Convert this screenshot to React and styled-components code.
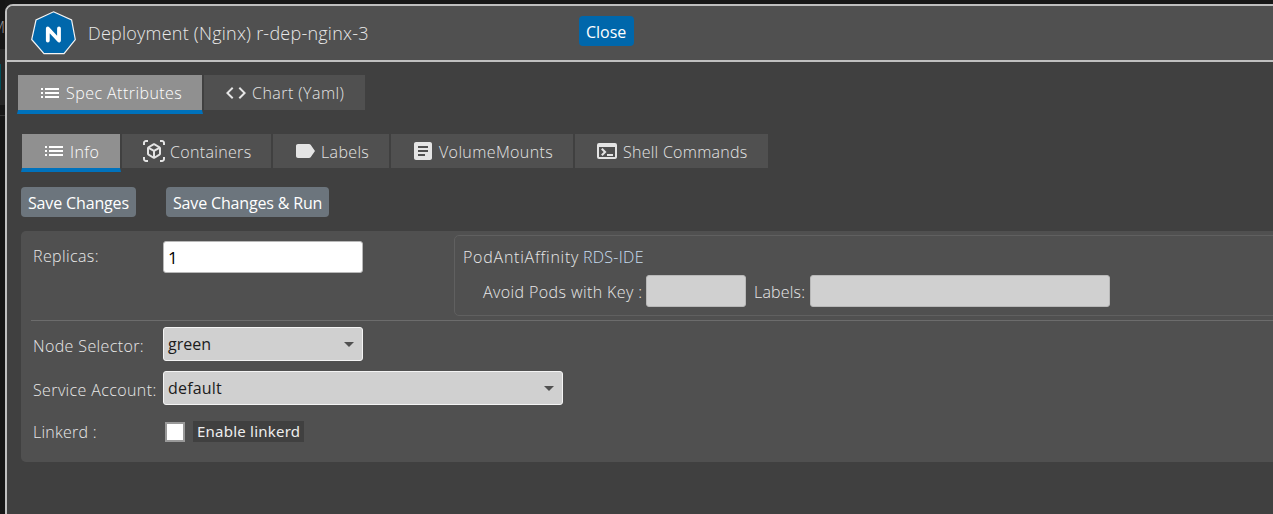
import React from "react";
import styled, { createGlobalStyle } from "styled-components";
import { MdList, MdCode, MdOutlineViewInAr, MdLabel, MdArticle, MdTerminal } from "react-icons/md";

const GlobalStyle = createGlobalStyle`
  * { box-sizing: border-box; }
  body {
    margin: 0;
    overflow: hidden;
    background: #181818;
    color: #e8e8e8;
    font: 300 16px/24px "Open Sans", "Noto Sans", sans-serif;
  }
`;

const Screen = styled.div`
  display: flex;
  width: 100vw;
  height: 100vh;
  overflow: hidden;
`;

const Backdrop = styled.aside`
  flex: 0 0 5px;
  display: flex;
  flex-direction: column;
  overflow: hidden;
  background: #161616;
`;

const BackdropTitle = styled.div`
  height: 49px;
  padding-top: 15px;
  display: flex;
  justify-content: flex-end;
  color: #9a9a9a;
`;

const BackdropItem = styled.div`
  height: 56px;
  padding-top: 15px;
  background: #272727;
`;

const BackdropMark = styled.div`
  width: 1px;
  height: 26px;
  background: #00505c;
`;

const BackdropRule = styled.div`
  height: 11px;
  border-bottom: 1px solid #333;
`;

const Window = styled.main`
  flex: 0 0 1290px;
  height: 540px;
  margin-top: 4px;
  border: 2px solid #c0c0c0;
  border-radius: 8px;
  background: #404040;
  overflow: hidden;
`;

const Header = styled.header`
  display: flex;
  height: 56px;
  padding-left: 23px;
  border-bottom: 2px solid #c0c0c0;
  background: #505050;
`;

const Logo = styled.svg`
  flex: none;
  width: 48px;
  height: 48px;
  margin-top: 3px;
`;

const Text = styled.span`
  display: block;
  flex: none;
  white-space: nowrap;
  width: ${(p) => (p.$w ? `${p.$w}px` : "auto")};
  letter-spacing: ${(p) => p.$ls || 0}px;
`;

const Title = styled(Text)`
  margin: 15px 0 0 10px;
  font-size: 18px;
`;

const Button = styled.button`
  flex: none;
  width: ${(p) => p.$w}px;
  height: 30px;
  padding: 1px 0 0 7px;
  border: 0;
  border-radius: 4px;
  background: ${(p) => (p.$primary ? "#0067ab" : "#6c757d")};
  color: #fff;
  font: 400 16px/24px "Open Sans", "Noto Sans", sans-serif;
  text-align: left;
`;

const CloseButton = styled(Button)`
  margin: 10px 0 0 211px;
`;

const TabBar = styled.nav`
  display: flex;
  align-items: flex-start;
  padding-left: ${(p) => p.$left}px;
  margin-top: ${(p) => p.$top}px;
  height: ${(p) => p.$h + 4}px;
`;

const Tab = styled.div`
  display: flex;
  align-items: center;
  width: ${(p) => p.$w}px;
  height: ${(p) => p.$h + (p.$active ? 4 : 0)}px;
  padding-left: 20px;
  border: 1px solid #404040;
  border-width: 0 1px ${(p) => (p.$active ? "4px" : "0")};
  border-bottom-color: #0072bc;
  background: ${(p) => (p.$active ? "#909090" : "#505050")};
  color: ${(p) => (p.$active ? "#fff" : "#e4e4e4")};
  svg {
    flex: none;
    width: 24px;
    height: 24px;
    margin-right: 4px;
  }
`;

const SubTabText = styled(Text)`
  padding-top: 2px;
`;

const Actions = styled.div`
  display: flex;
  gap: 30px;
  padding: 15px 0 14px 14px;
`;

const Panel = styled.section`
  width: 1290px;
  height: 231px;
  margin-left: 14px;
  padding-left: 10px;
  border-radius: 5px;
  background: #505050;
`;

const TopRow = styled.div`
  display: flex;
  height: 90px;
  padding: 4px 0 0 2px;
  border-bottom: 1px solid #6c6c6c;
`;

const Label = styled(Text)`
  width: 130px;
`;

const ReplicaLabel = styled(Label)`
  margin-top: 9px;
`;

const Input = styled.input`
  flex: none;
  width: ${(p) => p.$w}px;
  height: 32px;
  padding: 0 4px;
  border: 1px solid #b8b8b8;
  border-radius: 3px;
  background: ${(p) => (p.$off ? "#d0d0d0" : "#fff")};
  color: #000;
  font: 400 17px/24px "Open Sans", "Noto Sans", sans-serif;
`;

const ReplicaInput = styled(Input)`
  margin-top: 6px;
`;

const Affinity = styled.div`
  width: 1000px;
  height: 81px;
  margin-left: 91px;
  padding: 9px 0 0 8px;
  border: 1px solid #606060;
  border-radius: 5px;
`;

const AffinityTitle = styled.div`
  display: flex;
  height: 30px;
`;

const Link = styled(Text)`
  color: #c8def0;
`;

const AffinityFields = styled.div`
  display: flex;
  align-items: center;
  padding-left: 20px;
`;

const FieldLabel = styled(Text)`
  padding: 2px 0 0 ${(p) => p.$pad || 0}px;
`;

const Row = styled.div`
  display: flex;
  align-items: center;
  padding-left: 2px;
  height: ${(p) => p.$h}px;
  margin-top: ${(p) => p.$top}px;
`;

const RowLabel = styled(Label)`
  padding-top: ${(p) => p.$pad}px;
`;

const Select = styled.div`
  display: flex;
  align-items: center;
  justify-content: space-between;
  width: ${(p) => p.$w}px;
  height: 34px;
  padding: 0 8px 0 4px;
  border: 1px solid #f4f4f4;
  border-radius: 3px;
  background: #d0d0d0;
  color: #1c1c1c;
  font-weight: 400;
`;

const Caret = styled.i`
  border: 5px solid transparent;
  border-top-color: #505050;
  border-bottom: 0;
`;

const Check = styled.div`
  width: 20px;
  height: 20px;
  margin: 0 8px 0 2px;
  border: 2px solid #999;
  background: #fff;
`;

const CheckLabel = styled.div`
  width: 111px;
  height: 21px;
  padding-left: 4px;
  background: #404040;
  color: #eee;
  font: 400 15px/21px "Noto Sans", sans-serif;
`;

const subTabs = [
  { icon: MdList, text: "Info", w: 100, ls: 0.4, active: true },
  { icon: MdOutlineViewInAr, text: "Containers", w: 151, ls: 0.33 },
  { icon: MdLabel, text: "Labels", w: 118, ls: 0.35 },
  { icon: MdArticle, text: "VolumeMounts", w: 184, ls: 0.38 },
  { icon: MdTerminal, text: "Shell Commands", w: 195, ls: 0.26 },
];

export default function App() {
  return (
    <Screen>
      <GlobalStyle />
      <Backdrop>
        <BackdropTitle>M</BackdropTitle>
        <BackdropItem><BackdropMark /></BackdropItem>
        <BackdropRule />
      </Backdrop>
      <Window>
        <Header>
          <Logo viewBox="0 0 48 48">
            <path d="M23.5 2.8 41.6 11 45.3 30.5 34 44.7H14L1.7 30.5 6 11Z" fill="#0067ab" stroke="#f4f4f4" strokeWidth="1.2" />
            <path d="M17.8 31.5V19.5L29 31.5V19.5" fill="none" stroke="#fff" strokeWidth="3.8" strokeLinecap="round" strokeLinejoin="round" />
          </Logo>
          <Title $w={280} $ls={0.23}>Deployment (Nginx) r-dep-nginx-3</Title>
          <CloseButton $primary $w={55}><Text>Close</Text></CloseButton>
        </Header>
        <TabBar $left={10} $top={13} $h={35}>
          <Tab $active $w={186} $h={35}><MdList /><Text $ls={0.45}>Spec Attributes</Text></Tab>
          <Tab $w={163} $h={35}><MdCode /><Text $ls={0.45}>Chart (Yaml)</Text></Tab>
        </TabBar>
        <TabBar $left={14} $top={20} $h={34}>
          {subTabs.map(({ icon: Icon, text, w, active, ls }) => (
            <Tab key={text} $active={active} $w={w} $h={34}><Icon /><SubTabText $ls={ls}>{text}</SubTabText></Tab>
          ))}
        </TabBar>
        <Actions>
          <Button $w={115}><Text $ls={-0.15}>Save Changes</Text></Button>
          <Button $w={163}><Text $ls={-0.16}>Save Changes &amp; Run</Text></Button>
        </Actions>
        <Panel>
          <TopRow>
            <ReplicaLabel $ls={0.38}>Replicas:</ReplicaLabel>
            <ReplicaInput $w={200} defaultValue="1" />
            <Affinity>
              <AffinityTitle>
                <Text $w={120} $ls={0.75}>PodAntiAffinity</Text>
                <Link $ls={0.28}>RDS-IDE</Link>
              </AffinityTitle>
              <AffinityFields>
                <FieldLabel $w={163} $ls={0.4}>Avoid Pods with Key :</FieldLabel>
                <Input $off $w={100} />
                <FieldLabel $w={64} $pad={8} $ls={0.2}>Labels:</FieldLabel>
                <Input $off $w={300} />
              </AffinityFields>
            </Affinity>
          </TopRow>
          <Row $top={6} $h={34}>
            <RowLabel $pad={4} $ls={0.38}>Node Selector:</RowLabel>
            <Select $w={200}><Text>green</Text><Caret /></Select>
          </Row>
          <Row $top={10} $h={34}>
            <RowLabel $pad={4} $ls={0.38}>Service Account:</RowLabel>
            <Select $w={400}><Text $ls={0.2}>default</Text><Caret /></Select>
          </Row>
          <Row $top={16} $h={21}>
            <RowLabel $pad={0} $ls={0.25}>Linkerd :</RowLabel>
            <Check />
            <CheckLabel><Text $ls={0.23}>Enable linkerd</Text></CheckLabel>
          </Row>
        </Panel>
      </Window>
    </Screen>
  );
}
